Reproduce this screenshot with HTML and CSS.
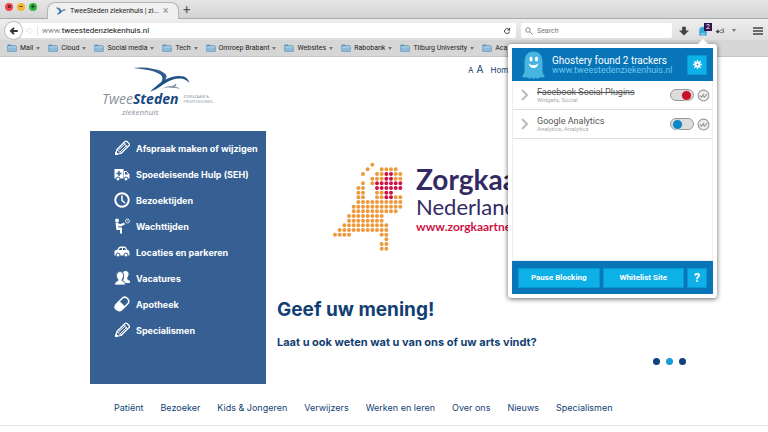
FILE: index.html
```html
<!DOCTYPE html>
<html lang="nl">
<head>
    <meta charset="UTF-8">
    <meta name="viewport" content="width=device-width, initial-scale=1.0">
    <title>TweeSteden ziekenhuis</title>
    <link rel="stylesheet" href="styles.css">
</head>
<body>
    <!-- Shared icons -->
    <svg class="sprite" aria-hidden="true">
        <symbol id="folder" viewBox="0 0 20 16">
            <path d="M1 3V2q0-1 1-1h5l2 2h8q1 0 1 1v2H1z" fill="#5b93bb"/>
            <rect x="1" y="4" width="18" height="11" rx="1" fill="#8dbad8" stroke="#5488ad"/>
            <path d="M2 6h16" stroke="#b9d8ea" stroke-width="2"/>
        </symbol>
        <symbol id="pencil" viewBox="0 0 32 32">
            <path d="M3 29l3-10L22 3q2-2 4 0l4 4q2 2 0 4L14 27z" fill="none" stroke="#fff" stroke-width="2.5" stroke-linejoin="round"/>
            <path d="M19 6l8 8M6 19l8 8M9 20L23 7M12 24L26 10M3 29l1-5 4 4z" fill="#fff" stroke="#fff" stroke-width="2"/>
        </symbol>
        <symbol id="bird" viewBox="0 0 174 76">
            <path d="M2 3q34-4 62 3 26 4 38 17 5 10-5 21l-12 9q9-14 5-24Q80 10 2 3z" fill="#2f5c90"/>
            <path d="M54 75q8-9 20-18 20-19 44-26 20-6 38-2 14 5 17 20-12-15-29-14-26 0-48 17-20 16-42 23z" fill="#1f4f87"/>
            <path d="M88 66q18-10 32-8 8-3 12-8 4 6-3 10 12 0 15 8-9-6-20-4-17-4-36 2z" fill="#8a96a4"/>
        </symbol>
    </svg>

    <header class="browser">
        <div class="tab-strip">
            <div class="lights">
                <span class="light red">×</span>
                <span class="light yellow">−</span>
                <span class="light green">+</span>
            </div>
            <div class="tab">
                <svg class="favicon" viewBox="0 0 16 12"><path d="M1 1q7 0 7 6 3-4 7-3-5 1-8 5-3 2-5 2 4-2 4-5-1-3-5-5z" fill="#2f6aa8" stroke="#2f6aa8"/></svg>
                <span class="tab-title">TweeSteden ziekenhuis | zi...</span>
                <button class="plain tab-close" aria-label="Close tab">×</button>
            </div>
            <button class="plain new-tab" aria-label="New tab">+</button>
        </div>

        <div class="toolbar">
            <button class="back" aria-label="Back">
                <svg viewBox="0 0 16 16"><path d="M14 8H4M8 3L3 8l5 5" fill="none" stroke="#333" stroke-width="3"/></svg>
            </button>
            <div class="url-bar">
                <svg class="forward" viewBox="0 0 16 16"><path d="M2 6h6V3l5 5-5 5v-3H2z" fill="none" stroke="#ddd"/></svg>
                <span class="url">www.<b>tweestedenziekenhuis.nl</b></span>
                <button class="plain reload" aria-label="Reload">
                    <svg viewBox="0 0 16 16"><path d="M13 9a5 5 0 1 1-2-5" fill="none" stroke="#444" stroke-width="2"/><path d="M14 1v6H8z" fill="#444"/></svg>
                </button>
            </div>
            <div class="search-bar">
                <svg viewBox="0 0 16 16"><circle cx="6" cy="6" r="4.5" fill="none" stroke="#888" stroke-width="2"/><path d="M9 9l6 6" stroke="#888" stroke-width="2"/></svg>
                <input type="text" aria-label="Search" placeholder="Search">
            </div>
            <div class="tools">
                <button class="plain" aria-label="Downloads">
                    <svg viewBox="0 0 16 16"><path d="M5 1h6v6h5l-8 8-8-8h5z" fill="#444"/></svg>
                </button>
                <button class="plain ghostery" aria-label="Ghostery">
                    <svg viewBox="0 0 16 16"><path d="M2 15V7q0-6 6-6t6 6v8H2z" fill="#39a9d8"/><path d="M5 12q3 2 6 0" stroke="#fff" fill="none"/></svg>
                    <span class="badge">2</span>
                </button>
                <button class="plain bug" aria-label="Inspect">
                    <svg viewBox="0 0 20 16"><path d="M1 9l5-3 4 3-4 4z" fill="#444"/><path d="M5 5l3 2M9 9l6-6M10 11h4M14 8l4-5M17 5v7M13 12l5-4" stroke="#666" stroke-width="1.5"/></svg>
                </button>
                <i class="caret"></i>
                <button class="plain menu-button" aria-label="Menu">
                    <svg viewBox="0 0 20 16"><path d="M0 2h20M0 8h20M0 14h20" stroke="#444" stroke-width="3"/></svg>
                </button>
            </div>
        </div>

        <nav class="bookmarks" aria-label="Bookmarks">
            <a href="#"><svg><use href="#folder"/></svg>Mail<i class="caret"></i></a>
            <a href="#"><svg><use href="#folder"/></svg>Cloud<i class="caret"></i></a>
            <a href="#"><svg><use href="#folder"/></svg>Social media<i class="caret"></i></a>
            <a href="#"><svg><use href="#folder"/></svg>Tech<i class="caret"></i></a>
            <a href="#"><svg><use href="#folder"/></svg>Omroep Brabant<i class="caret"></i></a>
            <a href="#"><svg><use href="#folder"/></svg>Websites<i class="caret"></i></a>
            <a href="#"><svg><use href="#folder"/></svg>Rabobank<i class="caret"></i></a>
            <a href="#"><svg><use href="#folder"/></svg>Tilburg University<i class="caret"></i></a>
            <a href="#"><svg><use href="#folder"/></svg>Aca</a>
        </nav>
    </header>

    <main class="page">
        <div class="page-top">
            <a class="logo" href="#">
                <svg class="logo-bird"><use href="#bird"/></svg>
                <span class="logo-row">
                    <span class="logo-name">Twee<b>Steden</b></span>
                    <span class="logo-tag">ZORGZAAM &amp;<br>PROFESSIONEEL</span>
                </span>
                <span class="logo-sub">ziekenhuis</span>
            </a>
            <div class="top-links">
                <a class="size-small" href="#">A</a>
                <a class="size-large" href="#">A</a>
                <a class="home" href="#">Home</a>
            </div>
        </div>

        <div class="banner">
            <nav class="side-menu">
                <a href="#"><svg><use href="#pencil"/></svg>Afspraak maken of wijzigen</a>
                <a href="#">
                    <svg viewBox="0 0 32 32"><path d="M1 6h18v19H1zM20 10h5l6 7v8H20z" fill="#fff"/><path d="M22 12h3l3 5h-6z" fill="#365f93"/><path d="M10 10v10M5 15h10" stroke="#365f93" stroke-width="3"/><circle cx="8" cy="26" r="4" fill="#fff" stroke="#365f93" stroke-width="2"/><circle cx="24" cy="26" r="4" fill="#fff" stroke="#365f93" stroke-width="2"/></svg>
                    Spoedeisende Hulp (SEH)
                </a>
                <a href="#">
                    <svg viewBox="0 0 32 32"><circle cx="16" cy="16" r="13.5" fill="none" stroke="#fff" stroke-width="4"/><path d="M16 7v10l6 5" fill="none" stroke="#fff" stroke-width="3"/></svg>
                    Bezoektijden
                </a>
                <a href="#">
                    <svg viewBox="0 0 32 32"><circle cx="6" cy="5" r="4" fill="#fff"/><path d="M5 10l7 5 9-4" fill="none" stroke="#fff" stroke-width="4"/><path d="M3 10h5l1 9h7v12h-4v-7H5z" fill="#fff"/><circle cx="27" cy="6" r="4" fill="none" stroke="#fff" stroke-width="1.5"/><path d="M27 4v2h2" fill="none" stroke="#fff"/></svg>
                    Wachttijden
                </a>
                <a href="#">
                    <svg viewBox="0 0 32 32"><path d="M1 14q1-2 5-2l4-6q1-1 3-1h8q2 0 3 2l3 5q4 0 4 5v6H1z" fill="#fff"/><path d="M9 12l3-4h4v4zM18 8h4l2 4h-6z" fill="#365f93"/><circle cx="8" cy="22" r="4" fill="#fff" stroke="#365f93" stroke-width="2"/><circle cx="24" cy="22" r="4" fill="#fff" stroke="#365f93" stroke-width="2"/></svg>
                    Locaties en parkeren
                </a>
                <a href="#">
                    <svg viewBox="0 0 32 32"><path d="M18 4q3-3 7-2 5 2 4 8-1 4-3 6l1 3 5 3v4h-9l-5-5q5-8 0-17z" fill="#fff"/><path d="M12 3q7 0 7 8 0 5-3 8v2q7 2 7 9H1q0-7 7-9v-2q-3-3-3-8 0-8 7-8z" fill="#fff" stroke="#365f93" stroke-width="1.5"/></svg>
                    Vacatures
                </a>
                <a href="#">
                    <svg viewBox="0 0 32 32"><path d="M5 16L17 4q5-4 10 1t1 10L16 27q-5 5-11 0t0-11z" fill="none" stroke="#fff" stroke-width="3"/><path d="M11 10l11 11-7 7q-6 3-10-1t-1-10z" fill="#fff"/></svg>
                    Apotheek
                </a>
                <a href="#"><svg><use href="#pencil"/></svg>Specialismen</a>
            </nav>

            <section class="slide">
                <div class="promo">
                    <!-- Each row is a dotted line: one round dot every 14 units -->
                    <svg class="dot-map" viewBox="12 12 214 270" role="img" aria-label="Kaart van Nederland">
                        <path class="dots" d="M132 20h1M118 34h1M160 34h43M104 48h1M146 48h15M202 48h15M132 62h29M202 62h15M104 76h1M132 76h1M90 90h15M90 104h15M146 104h15M90 118h15M146 118h15M202 118h15M90 132h127M76 146h141M76 160h127M62 174h99M62 188h99M48 202h127M34 216h141M20 230h43M160 230h15M174 244h1M160 258h15M160 272h15"/>
                        <path class="dots dots-red" d="M174 48h15M174 62h15M146 76h71M146 90h71M174 104h15M174 118h15"/>
                    </svg>
                    <div class="promo-text">
                        <span class="promo-name">Zorgkaart</span>
                        <span class="promo-land">Nederland</span>
                        <span class="promo-url">www.zorgkaartnederland.nl</span>
                    </div>
                </div>
                <h1>Geef uw mening!</h1>
                <p>Laat u ook weten wat u van ons of uw arts vindt?</p>
                <div class="pager">
                    <button aria-label="Slide 1"></button>
                    <button class="active" aria-label="Slide 2"></button>
                    <button aria-label="Slide 3"></button>
                </div>
            </section>
        </div>

        <nav class="main-nav">
            <a href="#">Patiënt</a>
            <a href="#">Bezoeker</a>
            <a href="#">Kids &amp; Jongeren</a>
            <a href="#">Verwijzers</a>
            <a href="#">Werken en leren</a>
            <a href="#">Over ons</a>
            <a href="#">Nieuws</a>
            <a href="#">Specialismen</a>
        </nav>
    </main>

    <aside class="popup">
        <header class="popup-header">
            <svg class="ghost" viewBox="0 0 46 56">
                <path d="M5 24Q5 1 23 1t18 23v16q1 8 5 10-5 5-10 2-5 6-9 1-4 5-8 0-5 5-9-1-5 3-10-2 4-2 5-10z" fill="#48b4e0"/>
                <ellipse cx="18" cy="16" rx="3" ry="5" fill="#fff"/><ellipse cx="29" cy="16" rx="3" ry="5" fill="#fff"/>
                <path d="M13 25q10 7 20 0-3 9-10 9t-10-9z" fill="#fff"/>
            </svg>
            <div class="popup-title">
                <strong>Ghostery found 2 trackers</strong>
                <span>www.tweestedenziekenhuis.nl</span>
            </div>
            <button class="blue-button square" aria-label="Settings">
                <svg viewBox="0 0 20 20"><circle cx="10" cy="10" r="4.5" fill="none" stroke="#fff" stroke-width="4"/><path d="M10 0v4M10 16v4M0 10h4M16 10h4M3 3l3 3M14 14l3 3M17 3l-3 3M6 14l-3 3" stroke="#fff" stroke-width="3"/></svg>
            </button>
        </header>
        <ul class="trackers">
            <li>
                <svg class="chevron" viewBox="0 0 8 12"><path d="M1 1l5 5-5 5" fill="none" stroke="#bbb" stroke-width="2"/></svg>
                <div class="tracker">
                    <label for="facebook" class="blocked">Facebook Social Plugins</label>
                    <small>Widgets, Social</small>
                </div>
                <input type="checkbox" id="facebook" class="switch" checked>
                <button class="plain trust" aria-label="Trust"><svg viewBox="0 0 24 24"><circle cx="12" cy="12" r="10" fill="#eee" stroke="#999" stroke-width="2"/><path d="M5 12l3 3 5-6M11 12l3 3 5-6" fill="none" stroke="#999" stroke-width="2"/></svg></button>
            </li>
            <li>
                <svg class="chevron" viewBox="0 0 8 12"><path d="M1 1l5 5-5 5" fill="none" stroke="#bbb" stroke-width="2"/></svg>
                <div class="tracker">
                    <label for="analytics">Google Analytics</label>
                    <small>Analytics, Analytics</small>
                </div>
                <input type="checkbox" id="analytics" class="switch">
                <button class="plain trust" aria-label="Trust"><svg viewBox="0 0 24 24"><circle cx="12" cy="12" r="10" fill="#eee" stroke="#999" stroke-width="2"/><path d="M5 12l3 3 5-6M11 12l3 3 5-6" fill="none" stroke="#999" stroke-width="2"/></svg></button>
            </li>
        </ul>
        <footer class="popup-footer">
            <button class="blue-button">Pause Blocking</button>
            <button class="blue-button">Whitelist Site</button>
            <button class="blue-button square help">?</button>
        </footer>
    </aside>
</body>
</html>
```
FILE: styles.css
```css
* {
    box-sizing: border-box;
}

body {
    margin: 0;
    min-height: 100vh;
    position: relative;
    overflow: hidden;
    background-color: #fff;
    color: #123f73;
    font-family: Inter, Roboto, sans-serif;
}

a {
    color: inherit;
    text-decoration: none;
}

button {
    font-family: inherit;
    padding: 0;
    cursor: pointer;
}

.plain {
    background: none;
    border: none;
}

.sprite {
    display: none;
}

/* Browser window */
.browser {
    background-color: #dcdcdc;
    border-bottom: 1px solid #c4c4c4;
    color: #222;
    font-family: Roboto, sans-serif;
    font-size: 7px;
}

.tab-strip {
    display: flex;
    align-items: flex-end;
    height: 19px;
    background: linear-gradient(#e6e6e6, #d4d4d4);
    border-bottom: 1px solid #aaa;
}

.lights {
    display: flex;
    gap: 4px;
    padding: 0 10px 7px 5px;
}

.light {
    width: 8px;
    height: 8px;
    border-radius: 50%;
    font-size: 7px;
    line-height: 8px;
    text-align: center;
    font-weight: bold;
}

.red {
    background-color: #f4474a;
}

.yellow {
    background-color: #f5b52e;
}

.green {
    background-color: #2db83c;
}

.tab {
    display: flex;
    align-items: center;
    gap: 4px;
    width: 132px;
    height: 17px;
    margin-bottom: -1px;
    padding: 0 10px 0 8px;
    background-color: #f0f0f0;
    border: 1px solid #b4b4b4;
    border-bottom: none;
    border-radius: 8px 8px 0 0;
}

.favicon {
    flex: none;
    width: 10px;
    height: 8px;
}

.tab-title {
    flex: 1;
    white-space: nowrap;
}

.tab-close {
    color: #888;
    font-size: 10px;
    line-height: 10px;
}

.new-tab {
    padding: 0 4px;
    color: #555;
    font-size: 13px;
    line-height: 16px;
}

.toolbar {
    display: flex;
    align-items: center;
    height: 21px;
    padding: 2px 5px 0 4px;
    background: linear-gradient(#eee, #dedede);
}

.back {
    display: flex;
    align-items: center;
    justify-content: center;
    width: 19px;
    height: 19px;
    margin-right: -2px;
    background-color: #fff;
    border: 1px solid #bbb;
    border-radius: 50%;
    z-index: 1;
}

.back svg {
    width: 10px;
}

.url-bar {
    flex: 1;
    display: flex;
    align-items: center;
    height: 15px;
    padding: 0 5px 0 4px;
    background-color: #fff;
    border-radius: 0 2px 2px 0;
}

.forward {
    width: 9px;
    margin-right: 3px;
}

.url {
    flex: 1;
    padding-left: 4px;
    border-left: 1px solid #e4e4e4;
    color: #888;
    font-size: 8px;
}

.url b {
    color: #111;
    font-weight: normal;
}

.reload svg {
    display: block;
    width: 8px;
}

.search-bar {
    display: flex;
    align-items: center;
    gap: 4px;
    width: 151px;
    height: 15px;
    margin-left: 5px;
    padding: 0 4px;
    background-color: #fff;
    border-radius: 2px;
}

.search-bar svg {
    width: 8px;
}

.search-bar input {
    flex: 1;
    min-width: 0;
    padding: 0;
    border: none;
    font-family: inherit;
    font-size: 7px;
}

.tools {
    display: flex;
    align-items: center;
    gap: 7px;
    width: 91px;
    padding-left: 7px;
}

.tools svg {
    display: block;
    width: 10px;
}

.ghostery {
    position: relative;
    margin-left: 2px;
}

.badge {
    position: absolute;
    top: -3px;
    right: -4px;
    width: 8px;
    height: 8px;
    background-color: #32124d;
    color: #fff;
    font-size: 7px;
    line-height: 8px;
}

.caret {
    border: 2px solid transparent;
    border-top: 3px solid #777;
    border-bottom: none;
}

.menu-button {
    margin-left: auto;
}

.bookmarks {
    display: flex;
    gap: 8px;
    height: 16px;
    padding-left: 7px;
    background-color: #d6d6d6;
    white-space: nowrap;
}

.bookmarks a {
    display: flex;
    align-items: center;
    gap: 3px;
}

.bookmarks svg {
    width: 10px;
    height: 8px;
}

/* Website */
.page {
    padding: 0 80px 0 90px;
}

.page-top {
    display: flex;
    justify-content: space-between;
    height: 74px;
}

.logo {
    display: flex;
    flex-direction: column;
    padding: 10px 0 0 12px;
    color: #8a919c;
    font-family: "Open Sans", sans-serif;
    font-style: italic;
}

.logo-bird {
    width: 58px;
    height: 25px;
    margin-left: 30px;
}

.logo-row {
    display: flex;
    align-items: center;
    gap: 5px;
    height: 14px;
    font-size: 14px;
    line-height: 14px;
}

.logo-name b {
    color: #17477f;
}

.logo-tag {
    font-size: 4px;
    line-height: 5px;
    font-style: normal;
}

.logo-sub {
    padding-left: 20px;
    font-size: 8px;
    line-height: 12px;
}

.top-links {
    display: flex;
    align-items: baseline;
    gap: 3px;
    width: 220px;
    padding-top: 6px;
    font-size: 8px;
}

.size-large {
    font-size: 10px;
}

.home {
    margin-left: 4px;
}

.banner {
    display: flex;
    min-height: 253px;
}

.side-menu {
    width: 176px;
    padding: 4px 0 0 24px;
    background-color: #365f93;
    color: #fff;
    font-size: 9px;
    font-weight: 700;
}

.side-menu a {
    display: flex;
    align-items: center;
    gap: 6px;
    height: 26px;
    white-space: nowrap;
}

.side-menu svg {
    width: 16px;
    height: 16px;
}

.slide {
    flex: 1;
    display: flex;
    flex-direction: column;
    padding: 31px 0 0 11px;
}

.promo {
    display: flex;
    gap: 12px;
    padding-left: 55px;
}

.dot-map {
    width: 72px;
    height: 90px;
}

.dots {
    fill: none;
    stroke: #ee9a3c;
    stroke-width: 12;
    stroke-linecap: round;
    stroke-dasharray: 0 14;
}

.dots-red {
    stroke: #cf1244;
}

.promo-text {
    display: flex;
    flex-direction: column;
    width: 160px;
    color: #342a63;
    font-family: Lato, sans-serif;
}

.promo-name {
    font-size: 28px;
    line-height: 34px;
    font-weight: 700;
}

.promo-land {
    font-size: 22px;
    line-height: 22px;
}

.promo-url {
    color: #cf1244;
    font-size: 12px;
    line-height: 18px;
    font-weight: 700;
}

h1 {
    margin: 46px 0 0;
    font-size: 19px;
    line-height: 24px;
    font-weight: 700;
}

.slide p {
    margin: 12px 0 0;
    font-size: 11px;
    line-height: 16px;
    font-weight: 700;
}

.pager {
    display: flex;
    justify-content: flex-end;
    gap: 6px;
    padding: 8px 2px 0 0;
}

.pager button {
    width: 7px;
    height: 7px;
    border: none;
    border-radius: 50%;
    background-color: #0f4279;
}

.pager .active {
    background-color: #189bd7;
}

.main-nav {
    display: flex;
    gap: 17px;
    margin: 0 -80px 0 -90px;
    padding: 16px 0 9px 114px;
    border-bottom: 1px solid #e8e8e8;
    font-size: 9px;
    line-height: 16px;
    white-space: nowrap;
}

/* Ghostery popup */
.popup {
    position: absolute;
    top: 44px;
    right: 51px;
    width: 209px;
    padding: 4px;
    background-color: #fff;
    border-radius: 3px;
    box-shadow: 0 1px 5px rgba(0, 0, 0, 0.6);
    color: #555;
    font-family: Roboto, sans-serif;
}

.popup::before {
    content: "";
    position: absolute;
    top: -5px;
    right: 9px;
    border: 5px solid transparent;
    border-top: none;
    border-bottom-color: #fff;
}

.popup-header {
    display: flex;
    align-items: center;
    gap: 7px;
    height: 33px;
    padding: 0 6px 0 10px;
    background-color: #0775b8;
}

.ghost {
    width: 23px;
    height: 28px;
}

.popup-title {
    flex: 1;
    color: #6cc8f0;
    font-size: 9px;
    line-height: 9px;
    white-space: nowrap;
}

.popup-title strong {
    display: block;
    color: #fff;
    font-size: 10px;
    line-height: 11px;
    font-weight: normal;
}

.blue-button {
    flex: 1;
    height: 20px;
    background-color: #0eb0e8;
    border: 1px solid #0799d2;
    color: #fff;
    font-size: 8px;
    font-weight: bold;
}

.square {
    flex: 0 0 20px;
}

.square svg {
    display: block;
    width: 9px;
    margin: 0 auto;
}

.help {
    font-size: 12px;
}

.trackers {
    min-height: 180px;
    margin: 0;
    padding: 0;
    border: 1px solid #eee;
    border-top: none;
    list-style: none;
}

.trackers li {
    display: flex;
    align-items: center;
    gap: 3px;
    height: 29px;
    padding: 0 2px 0 8px;
    border-bottom: 1px solid #ddd;
}

.chevron {
    width: 8px;
    height: 12px;
    margin-right: 5px;
}

.tracker {
    flex: 1;
}

.tracker label {
    display: block;
    font-size: 9px;
    line-height: 10px;
}

.tracker .blocked {
    text-decoration: line-through;
}

.tracker small {
    display: block;
    color: #aaa;
    font-size: 6px;
    line-height: 6px;
}

.switch {
    appearance: none;
    display: flex;
    align-items: center;
    width: 24px;
    height: 12px;
    margin: 0;
    padding: 0 1px;
    background-color: #ddd;
    border: 1px solid #999;
    border-radius: 6px;
}

.switch::before {
    content: "";
    width: 9px;
    height: 9px;
    background-color: #0c86c6;
    border: 1px solid #ddd;
    border-radius: 50%;
}

.switch:checked {
    justify-content: flex-end;
}

.switch:checked::before {
    background-color: #c8102a;
}

.trust svg {
    display: block;
    width: 13px;
}

.popup-footer {
    display: flex;
    align-items: center;
    gap: 3px;
    height: 33px;
    padding: 0 6px;
    background-color: #0775b8;
}
```
